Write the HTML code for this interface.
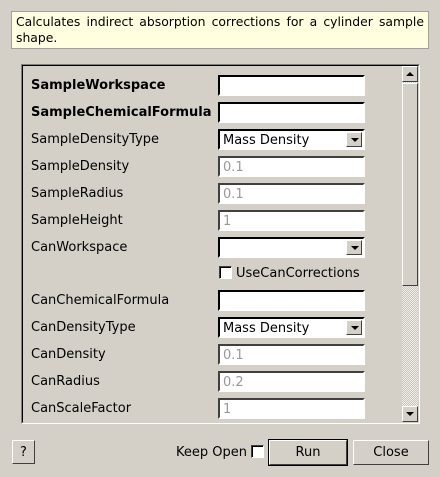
<!DOCTYPE html>
<html><head><meta charset="utf-8"><style>
*{box-sizing:border-box;margin:0;padding:0}
body{width:440px;height:477px;background:#d4d0c8;font-family:"DejaVu Sans","Liberation Sans",sans-serif;font-size:13px;color:#000;position:relative;overflow:hidden}
.a{position:absolute}
.tip{left:11px;top:11px;width:418px;height:38px;background:#ffffe0;border:1px solid #a0a0a0;padding:2px 4px;line-height:16px;font-size:12.4px;text-align:justify}
.panel{left:21px;top:64px;width:399px;height:360px;border:1px solid;border-color:#808080 #fff #fff #808080}
.panel2{left:22px;top:65px;width:397px;height:358px;border:1px solid;border-color:#000 #d4d0c8 #d4d0c8 #000}
.lbl{left:31px;height:22px;line-height:22px}
.b{font-weight:bold}
.in{left:218px;width:147px;height:21px;background:#fff;border:2px solid;border-color:#404040 #fff #fff #404040;padding-left:3px;line-height:19px;color:#999}
.in.c{color:#000;border-color:#000 #fff #fff #000}
.dd{position:absolute;right:1px;top:1px;width:16px;height:15px;background:#d4d0c8;border:1px solid;border-color:#fff #404040 #404040 #fff}
.dd:after{content:"";position:absolute;left:4px;top:5px;border-left:4px solid transparent;border-right:4px solid transparent;border-top:4px solid #000}
.sb{background:#d4d0c8;border:1px solid;border-color:#fff #404040 #404040 #fff}
.btn{background:#d4d0c8;border:1px solid;border-color:#fff #404040 #404040 #fff;text-align:center;line-height:23px;font-size:13px}
.cb{width:13px;height:13px;background:#fff;border:1px solid;border-color:#404040 #fff #fff #404040;box-shadow:inset 1px 1px 0 #000}
</style></head><body>
<div class="a tip">Calculates indirect absorption corrections for a cylinder sample shape.</div>
<div class="a panel"></div><div class="a panel2"></div>

<div class="a lbl b" style="top:75px">SampleWorkspace</div>
<div class="a in c" style="top:75px"></div>
<div class="a lbl b" style="top:102px">SampleChemicalFormula</div>
<div class="a in c" style="top:102px"></div>
<div class="a lbl" style="top:129px">SampleDensityType</div>
<div class="a in c" style="top:129px">Mass Density<span class="dd"></span></div>
<div class="a lbl" style="top:156px">SampleDensity</div>
<div class="a in" style="top:156px">0.1</div>
<div class="a lbl" style="top:183px">SampleRadius</div>
<div class="a in" style="top:183px">0.1</div>
<div class="a lbl" style="top:210px">SampleHeight</div>
<div class="a in" style="top:210px">1</div>
<div class="a lbl" style="top:237px">CanWorkspace</div>
<div class="a in c" style="top:237px"><span class="dd"></span></div>
<div class="a cb" style="left:219px;top:266px"></div>
<div class="a" style="left:236px;top:264px;line-height:20px">UseCanCorrections</div>
<div class="a lbl" style="top:290px">CanChemicalFormula</div>
<div class="a in c" style="top:290px"></div>
<div class="a lbl" style="top:317px">CanDensityType</div>
<div class="a in c" style="top:317px">Mass Density<span class="dd"></span></div>
<div class="a lbl" style="top:344px">CanDensity</div>
<div class="a in" style="top:344px">0.1</div>
<div class="a lbl" style="top:371px">CanRadius</div>
<div class="a in" style="top:371px">0.2</div>
<div class="a lbl" style="top:398px">CanScaleFactor</div>
<div class="a in" style="top:398px">1</div>

<div class="a" style="left:402px;top:66px;width:16px;height:356px;background-color:#e8e6e2;background-image:repeating-conic-gradient(#c8c4bc 0 25%,#f0efec 0 50%);background-size:2px 2px"></div>
<div class="a sb" style="left:402px;top:66px;width:16px;height:16px"><div class="a" style="left:3px;top:5px;border-left:4px solid transparent;border-right:4px solid transparent;border-bottom:4px solid #000"></div></div>
<div class="a sb" style="left:402px;top:83px;width:16px;height:203px"></div>
<div class="a sb" style="left:402px;top:406px;width:16px;height:16px"><div class="a" style="left:3px;top:5px;border-left:4px solid transparent;border-right:4px solid transparent;border-top:4px solid #000"></div></div>

<div class="a btn" style="left:12px;top:440px;width:23px;height:24px">?</div>
<div class="a" style="left:176px;top:443px;line-height:20px;font-size:13px">Keep Open</div>
<div class="a cb" style="left:251px;top:445px"></div>
<div class="a" style="left:268px;top:439px;width:80px;height:27px;border:1px solid #000"></div>
<div class="a btn" style="left:269px;top:440px;width:78px;height:25px">Run</div>
<div class="a btn" style="left:353px;top:440px;width:76px;height:25px">Close</div>
</body></html>
